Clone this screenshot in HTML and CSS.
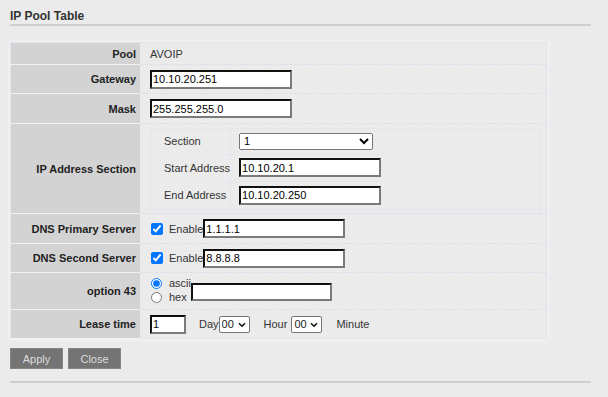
FILE: index.html
```html
<!DOCTYPE html>
<html>
<head>
    <title>IP Pool Table</title>
    <meta name="viewport" content="width=device-width, initial-scale=1">
    <link rel="stylesheet" href="styles.css">
</head>
<body>
    <div class="page">
        <div class="title">IP Pool Table</div>

        <table class="pool-table">
            <tr class="row-pool">
                <td class="label">Pool</td>
                <td class="value">AVOIP</td>
            </tr>
            <tr class="row-std">
                <td class="label">Gateway</td>
                <td class="value"><input type="text" class="ip" value="10.10.20.251"></td>
            </tr>
            <tr class="row-mask">
                <td class="label">Mask</td>
                <td class="value"><input type="text" class="ip" value="255.255.255.0"></td>
            </tr>
            <tr class="row-section">
                <td class="label">IP Address Section</td>
                <td class="value">
                    <table class="section-table">
                        <tr class="sub-row1">
                            <td class="sub-label">Section</td>
                            <td class="sub-value">
                                <select class="section-select">
                                    <option>1</option>
                                    <option>2</option>
                                    <option>3</option>
                                </select>
                            </td>
                        </tr>
                        <tr class="sub-row2">
                            <td class="sub-label">Start Address</td>
                            <td class="sub-value"><input type="text" class="ip" value="10.10.20.1"></td>
                        </tr>
                        <tr class="sub-row3">
                            <td class="sub-label">End Address</td>
                            <td class="sub-value"><input type="text" class="ip" value="10.10.20.250"></td>
                        </tr>
                    </table>
                </td>
            </tr>
            <tr class="row-mask">
                <td class="label">DNS Primary Server</td>
                <td class="value">
                    <label class="enable"><input type="checkbox" checked>Enable</label><input type="text" class="ip" value="1.1.1.1">
                </td>
            </tr>
            <tr class="row-std">
                <td class="label">DNS Second Server</td>
                <td class="value">
                    <label class="enable"><input type="checkbox" checked>Enable</label><input type="text" class="ip" value="8.8.8.8">
                </td>
            </tr>
            <tr class="row-opt">
                <td class="label">option 43</td>
                <td class="value">
                    <div class="opt-wrap">
                        <div class="radios">
                            <label class="radio"><input type="radio" name="fmt" checked>ascii</label>
                            <label class="radio"><input type="radio" name="fmt">hex</label>
                        </div>
                        <input type="text" class="ip opt-input" value="">
                    </div>
                </td>
            </tr>
            <tr class="row-lease">
                <td class="label">Lease time</td>
                <td class="value">
                    <div class="lease">
                        <input type="text" class="ip days" value="1">
                        <span class="unit unit-day">Day</span>
                        <span class="sel-wrap">
                            <select class="small-select"><option>00</option></select>
                            <svg class="chev" width="8" height="6" viewBox="0 0 8 6"><path d="M1 1.2 L4 4.2 L7 1.2" fill="none" stroke="#111" stroke-width="1.6"/></svg>
                        </span>
                        <span class="unit unit-hour">Hour</span>
                        <span class="sel-wrap">
                            <select class="small-select"><option>00</option></select>
                            <svg class="chev" width="8" height="6" viewBox="0 0 8 6"><path d="M1 1.2 L4 4.2 L7 1.2" fill="none" stroke="#111" stroke-width="1.6"/></svg>
                        </span>
                        <span class="unit unit-min">Minute</span>
                    </div>
                </td>
            </tr>
        </table>

        <div class="buttons">
            <button class="btn">Apply</button>
            <button class="btn">Close</button>
        </div>

        <div class="bottom-line"></div>
    </div>
</body>
</html>
```

FILE: styles.css
```css
body {
    margin: 0;
    background-color: #ebebeb;
    font-family: "Liberation Sans", Arial, sans-serif;
    font-size: 11px;
    color: #333;
}

.page {
    padding: 9px 0 0 10px;
}

.title {
    width: 581px;
    font-size: 12px;
    font-weight: bold;
    line-height: 15px;
    color: #333;
    border-bottom: 2px solid #cfcfcf;
}

.pool-table {
    margin-top: 16px;
    width: 537px;
    border-collapse: collapse;
    border: 1px solid #e2e2ef;
    box-shadow: 0 0 5px #fafafa;
}

.pool-table > tbody > tr > td {
    padding: 0;
}

.label {
    width: 125px;
    padding-right: 4px !important;
    background-color: #d3d3d3;
    text-align: right;
    font-weight: bold;
    color: #222;
    border-bottom: 1px solid #f2f2f2;
    white-space: nowrap;
}

.value {
    padding-left: 10px !important;
    border-bottom: 1px dashed #dcdcee;
    vertical-align: middle;
    color: #333;
}

.row-pool { height: 22px; }
.row-std { height: 29px; }
.row-mask { height: 30px; }
.row-section { height: 90px; }
.row-opt { height: 37px; }
.row-lease { height: 29px; }

.ip {
    box-sizing: border-box;
    width: 142px;
    height: 19px;
    margin: 0;
    padding: 0 1px;
    border-width: 2px;
    border-style: solid;
    border-color: #111 #7a7a7a #7a7a7a #111;
    background: #fff;
    font-family: "Liberation Sans", Arial, sans-serif;
    font-size: 11px;
    color: #000;
    vertical-align: middle;
}

.section-table {
    width: 391px;
    border-collapse: collapse;
    border: 1px dotted #e0e0ee;
}

.sub-row1 { height: 26px; }
.sub-row2 { height: 27px; }
.sub-row3 { height: 28px; }

.sub-label {
    width: 64px;
    padding: 0 0 0 13px;
    border-right: 1px dotted #e0e0ee;
    border-bottom: 1px dotted #e0e0ee;
    color: #333;
    white-space: nowrap;
}

.sub-value {
    padding: 0 0 0 8px;
    border-bottom: 1px dotted #e0e0ee;
}

.section-select {
    box-sizing: border-box;
    width: 134px;
    height: 17px;
    margin: 0;
    font-family: "Liberation Sans", Arial, sans-serif;
    font-size: 11px;
    vertical-align: middle;
}

.enable {
    color: #333;
    vertical-align: middle;
    white-space: nowrap;
}

.enable input {
    width: 12px;
    height: 12px;
    margin: 0 6px 0 1px;
    vertical-align: -2px;
}

.opt-wrap {
    display: flex;
    align-items: center;
}

.radios {
    display: flex;
    flex-direction: column;
    width: 41px;
    line-height: 14px;
    margin-top: -2px;
    white-space: nowrap;
}

.radio input {
    width: 11px;
    height: 11px;
    margin: 0 7px 0 1px;
    vertical-align: -2px;
}

.opt-input {
    width: 141px;
    height: 18px;
    margin-top: 1px;
}

.lease {
    display: flex;
    align-items: center;
}

.days {
    width: 36px;
}

.unit {
    color: #333;
}

.unit-day { margin-left: 13px; }
.unit-hour { margin-left: 14px; margin-right: 4px; }
.unit-min { margin-left: 14px; }

.sel-wrap {
    position: relative;
    display: inline-block;
    height: 17px;
}

.small-select {
    appearance: none;
    -webkit-appearance: none;
    box-sizing: border-box;
    width: 31px;
    height: 17px;
    margin: 0;
    padding: 0 0 0 2px;
    border: 1px solid #767676;
    border-radius: 2px;
    background: #fff;
    color: #222;
    font-family: "Liberation Sans", Arial, sans-serif;
    font-size: 11px;
}

.chev {
    position: absolute;
    right: 4px;
    top: 6px;
    pointer-events: none;
}

.buttons {
    display: flex;
    gap: 5px;
    margin-top: 9px;
}

.btn {
    width: 53px;
    height: 21px;
    padding: 0;
    background-color: #747474;
    color: #dcdcdc;
    border: 1px solid #858585;
    font-family: "Liberation Sans", Arial, sans-serif;
    font-size: 11px;
}

.bottom-line {
    width: 581px;
    margin-top: 12px;
    border-bottom: 2px solid #cfcfcf;
}
```
